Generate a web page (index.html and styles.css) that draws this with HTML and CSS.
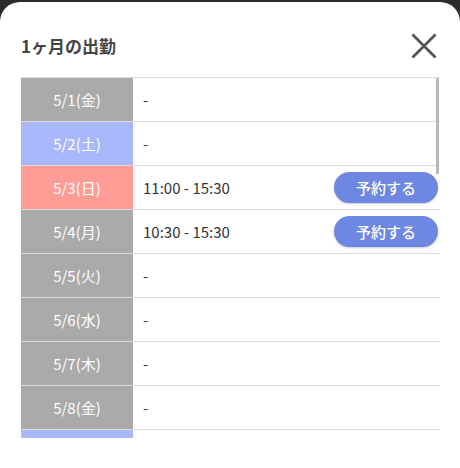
FILE: index.html
```html
<!DOCTYPE html>
<html lang="ja">
<head>
<meta charset="utf-8">
<link rel="stylesheet" href="styles.css">
</head>
<body>
<div class="modal">
  <div class="header">
    <h1 class="title">1ヶ月の出勤</h1>
    <button class="close" aria-label="閉じる">
      <svg width="26" height="26" viewBox="0 0 26 26"><path d="M1.5 1.5 L24.5 24.5 M24.5 1.5 L1.5 24.5" stroke="#555" stroke-width="2.8" fill="none"/></svg>
    </button>
  </div>
  <div class="scroll-wrap">
    <div class="list">
      <div class="row"><div class="date gray">5/1(金)</div><div class="time"><span>-</span></div></div>
      <div class="row"><div class="date sat">5/2(土)</div><div class="time"><span>-</span></div></div>
      <div class="row"><div class="date sun">5/3(日)</div><div class="time"><span>11:00 - 15:30</span><button class="reserve">予約する</button></div></div>
      <div class="row"><div class="date gray">5/4(月)</div><div class="time"><span>10:30 - 15:30</span><button class="reserve">予約する</button></div></div>
      <div class="row"><div class="date gray">5/5(火)</div><div class="time"><span>-</span></div></div>
      <div class="row"><div class="date gray">5/6(水)</div><div class="time"><span>-</span></div></div>
      <div class="row"><div class="date gray">5/7(木)</div><div class="time"><span>-</span></div></div>
      <div class="row"><div class="date gray">5/8(金)</div><div class="time"><span>-</span></div></div>
      <div class="row"><div class="date sat">5/9(土)</div><div class="time"><span>-</span></div></div>
      <div class="row"><div class="date sun">5/10(日)</div><div class="time"><span>-</span></div></div>
      <div class="row"><div class="date gray">5/11(月)</div><div class="time"><span>-</span></div></div>
      <div class="row"><div class="date gray">5/12(火)</div><div class="time"><span>-</span></div></div>
      <div class="row"><div class="date gray">5/13(水)</div><div class="time"><span>-</span></div></div>
      <div class="row"><div class="date gray">5/14(木)</div><div class="time"><span>-</span></div></div>
      <div class="row"><div class="date gray">5/15(金)</div><div class="time"><span>-</span></div></div>
      <div class="row"><div class="date sat">5/16(土)</div><div class="time"><span>-</span></div></div>
      <div class="row"><div class="date sun">5/17(日)</div><div class="time"><span>-</span></div></div>
      <div class="row"><div class="date gray">5/18(月)</div><div class="time"><span>-</span></div></div>
      <div class="row"><div class="date gray">5/19(火)</div><div class="time"><span>-</span></div></div>
      <div class="row"><div class="date gray">5/20(水)</div><div class="time"><span>-</span></div></div>
      <div class="row"><div class="date gray">5/21(木)</div><div class="time"><span>-</span></div></div>
      <div class="row"><div class="date gray">5/22(金)</div><div class="time"><span>-</span></div></div>
      <div class="row"><div class="date sat">5/23(土)</div><div class="time"><span>-</span></div></div>
      <div class="row"><div class="date sun">5/24(日)</div><div class="time"><span>-</span></div></div>
      <div class="row"><div class="date gray">5/25(月)</div><div class="time"><span>-</span></div></div>
      <div class="row"><div class="date gray">5/26(火)</div><div class="time"><span>-</span></div></div>
      <div class="row"><div class="date gray">5/27(水)</div><div class="time"><span>-</span></div></div>
      <div class="row"><div class="date gray">5/28(木)</div><div class="time"><span>-</span></div></div>
      <div class="row"><div class="date gray">5/29(金)</div><div class="time"><span>-</span></div></div>
      <div class="row"><div class="date sat">5/30(土)</div><div class="time"><span>-</span></div></div>
      <div class="row"><div class="date sun">5/31(日)</div><div class="time"><span>-</span></div></div>
    </div>
    <div class="thumb"></div>
  </div>
</div>
</body>
</html>
```

FILE: styles.css
```css
html, body {
  margin: 0;
  padding: 0;
  height: 100%;
  background: #2b2b2b;
  overflow: hidden;
}
body {
  font-family: "Noto Sans CJK JP", "Noto Sans", sans-serif;
}
.modal {
  margin-top: 2px;
  height: calc(100% - 2px);
  background: #fff;
  border-radius: 20px 20px 0 0;
  padding: 12px 20px 0 21px;
  box-sizing: border-box;
}
.header {
  height: 63px;
  display: flex;
  align-items: center;
  justify-content: space-between;
}
.title {
  margin: 0;
  font-size: 17px;
  font-weight: 700;
  color: #444;
  line-height: 1;
}
.close {
  border: 0;
  background: none;
  padding: 0;
  margin-right: 3px;
  width: 26px;
  height: 26px;
  display: flex;
}
.scroll-wrap {
  position: relative;
  height: 361px;
  border-top: 1px solid #dcdcdc;
  box-sizing: border-box;
}
.list {
  height: 100%;
  overflow-y: auto;
  scrollbar-width: none;
}
.list::-webkit-scrollbar {
  display: none;
}
.row {
  display: grid;
  grid-template-columns: 112px 1fr;
  height: 44px;
  border-bottom: 1px solid #dcdcdc;
  box-sizing: border-box;
}
.date {
  display: flex;
  align-items: center;
  justify-content: center;
  color: #fff;
  font-size: 15px;
}
.gray { background: #aaaaaa; }
.sat { background: #a8b8fa; }
.sun { background: #fe9c95; }
.time {
  display: flex;
  align-items: center;
  justify-content: space-between;
  padding-left: 10px;
  font-size: 15px;
  color: #333;
}
.reserve {
  border: 0;
  height: 31px;
  width: 104px;
  margin-right: 2px;
  border-radius: 16px;
  background: #6e87e2;
  color: #fff;
  font-family: inherit;
  font-size: 15px;
  font-weight: 500;
  box-shadow: 0 1px 2px rgba(0,0,0,0.2);
}
.thumb {
  position: absolute;
  top: 0;
  right: 1px;
  width: 3px;
  height: 96px;
  background: #b8b8b8;
}
```
